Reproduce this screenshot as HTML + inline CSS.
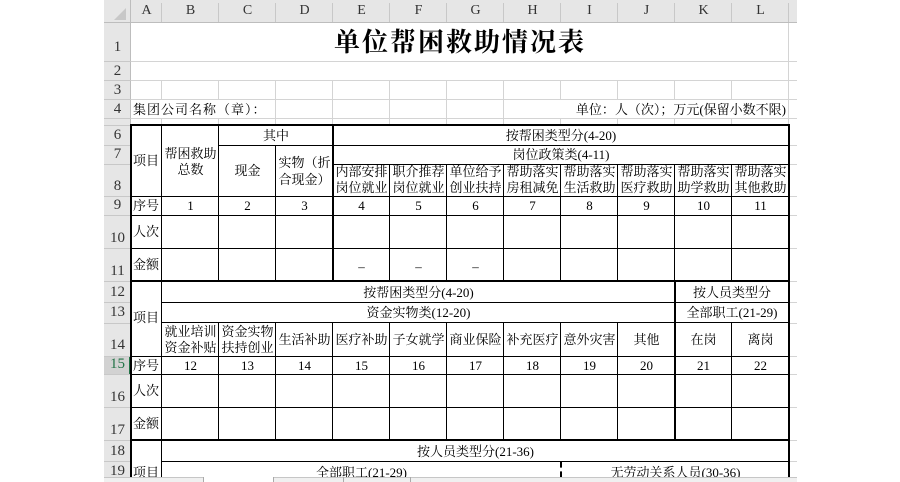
<!DOCTYPE html>
<html><head><meta charset="utf-8">
<style>
*{margin:0;padding:0;box-sizing:border-box}
body{width:900px;height:482px;background:#fff;position:relative;overflow:hidden;font-family:"Liberation Serif","Noto Serif CJK SC",serif;color:#000}
div{position:absolute}
.g{background:#d4d4d4}
.k{background:#000}
.t{display:flex;align-items:center;justify-content:center;text-align:center;font-size:13px;line-height:15px;white-space:nowrap}
.hd{background:#e6e6e6}
.cl{font-size:14px;color:#333;text-align:center;top:3px;height:18px}
.rn{font-size:15px;color:#333;left:104px;width:27px;text-align:center}
</style></head><body>
<div class="hd" style="left:104px;top:0;width:693px;height:23px"></div>
<div class="hd" style="left:104px;top:23px;width:27px;height:454px"></div>
<div style="left:104px;top:22px;width:693px;height:1px;background:#bdbdbd"></div>
<div style="left:130px;top:0;width:1px;height:477px;background:#bdbdbd"></div>
<div style="left:114px;top:8px;width:0;height:0;border-left:12px solid transparent;border-bottom:12px solid #c8c8c8"></div>
<div style="left:161px;top:3px;width:1px;height:19px;background:#c8c8c8"></div>
<div style="left:218px;top:3px;width:1px;height:19px;background:#c8c8c8"></div>
<div style="left:275px;top:3px;width:1px;height:19px;background:#c8c8c8"></div>
<div style="left:332px;top:3px;width:1px;height:19px;background:#c8c8c8"></div>
<div style="left:389px;top:3px;width:1px;height:19px;background:#c8c8c8"></div>
<div style="left:446px;top:3px;width:1px;height:19px;background:#c8c8c8"></div>
<div style="left:503px;top:3px;width:1px;height:19px;background:#c8c8c8"></div>
<div style="left:560px;top:3px;width:1px;height:19px;background:#c8c8c8"></div>
<div style="left:617px;top:3px;width:1px;height:19px;background:#c8c8c8"></div>
<div style="left:674px;top:3px;width:1px;height:19px;background:#c8c8c8"></div>
<div style="left:731px;top:3px;width:1px;height:19px;background:#c8c8c8"></div>
<div style="left:788px;top:3px;width:1px;height:19px;background:#c8c8c8"></div>
<div class="cl" style="left:131px;width:31px">A</div>
<div class="cl" style="left:162px;width:57px">B</div>
<div class="cl" style="left:219px;width:57px">C</div>
<div class="cl" style="left:276px;width:57px">D</div>
<div class="cl" style="left:333px;width:57px">E</div>
<div class="cl" style="left:390px;width:57px">F</div>
<div class="cl" style="left:447px;width:57px">G</div>
<div class="cl" style="left:504px;width:57px">H</div>
<div class="cl" style="left:561px;width:57px">I</div>
<div class="cl" style="left:618px;width:57px">J</div>
<div class="cl" style="left:675px;width:57px">K</div>
<div class="cl" style="left:732px;width:57px">L</div>
<div class="rn" style="top:39px">1</div>
<div class="rn" style="top:63px">2</div>
<div class="rn" style="top:82px">3</div>
<div class="rn" style="top:101px">4</div>
<div class="rn" style="top:127px">6</div>
<div class="rn" style="top:146px">7</div>
<div class="rn" style="top:178px">8</div>
<div class="rn" style="top:197px">9</div>
<div class="rn" style="top:230px">10</div>
<div class="rn" style="top:263px">11</div>
<div class="rn" style="top:284px">12</div>
<div class="rn" style="top:304px">13</div>
<div class="rn" style="top:337px">14</div>
<div style="left:104px;top:356px;width:27px;height:18px;background:#d2d2d2"></div>
<div style="left:129px;top:356px;width:2px;height:18px;background:#217346"></div>
<div class="rn" style="top:356px;color:#217346">15</div>
<div class="rn" style="top:389px">16</div>
<div class="rn" style="top:422px">17</div>
<div class="rn" style="top:443px">18</div>
<div class="rn" style="top:463px">19</div>
<div style="left:104px;top:61px;width:27px;height:1px;background:#c8c8c8"></div>
<div style="left:104px;top:80px;width:27px;height:1px;background:#c8c8c8"></div>
<div style="left:104px;top:99px;width:27px;height:1px;background:#c8c8c8"></div>
<div style="left:104px;top:118px;width:27px;height:1px;background:#c8c8c8"></div>
<div style="left:104px;top:125px;width:27px;height:1px;background:#c8c8c8"></div>
<div style="left:104px;top:145px;width:27px;height:1px;background:#c8c8c8"></div>
<div style="left:104px;top:164px;width:27px;height:1px;background:#c8c8c8"></div>
<div style="left:104px;top:196px;width:27px;height:1px;background:#c8c8c8"></div>
<div style="left:104px;top:215px;width:27px;height:1px;background:#c8c8c8"></div>
<div style="left:104px;top:248px;width:27px;height:1px;background:#c8c8c8"></div>
<div style="left:104px;top:281px;width:27px;height:1px;background:#c8c8c8"></div>
<div style="left:104px;top:302px;width:27px;height:1px;background:#c8c8c8"></div>
<div style="left:104px;top:323px;width:27px;height:1px;background:#c8c8c8"></div>
<div style="left:104px;top:356px;width:27px;height:1px;background:#c8c8c8"></div>
<div style="left:104px;top:374px;width:27px;height:1px;background:#c8c8c8"></div>
<div style="left:104px;top:407px;width:27px;height:1px;background:#c8c8c8"></div>
<div style="left:104px;top:440px;width:27px;height:1px;background:#c8c8c8"></div>
<div style="left:104px;top:461px;width:27px;height:1px;background:#c8c8c8"></div>

<div class="g" style="left:131px;top:61px;width:666px;height:1px"></div>
<div class="g" style="left:131px;top:80px;width:666px;height:1px"></div>
<div class="g" style="left:131px;top:99px;width:666px;height:1px"></div>
<div class="g" style="left:131px;top:118px;width:666px;height:1px"></div>
<div class="g" style="left:161px;top:80px;width:1px;height:19px"></div>
<div class="g" style="left:218px;top:80px;width:1px;height:19px"></div>
<div class="g" style="left:275px;top:80px;width:1px;height:45px"></div>
<div class="g" style="left:332px;top:80px;width:1px;height:45px"></div>
<div class="g" style="left:389px;top:80px;width:1px;height:45px"></div>
<div class="g" style="left:446px;top:80px;width:1px;height:45px"></div>
<div class="g" style="left:503px;top:80px;width:1px;height:45px"></div>
<div class="g" style="left:560px;top:80px;width:1px;height:19px"></div>
<div class="g" style="left:617px;top:80px;width:1px;height:19px"></div>
<div class="g" style="left:674px;top:80px;width:1px;height:19px"></div>
<div class="g" style="left:731px;top:80px;width:1px;height:19px"></div>
<div class="g" style="left:161px;top:118px;width:1px;height:7px"></div>
<div class="g" style="left:218px;top:118px;width:1px;height:7px"></div>
<div class="g" style="left:560px;top:118px;width:1px;height:7px"></div>
<div class="g" style="left:617px;top:118px;width:1px;height:7px"></div>
<div class="g" style="left:674px;top:118px;width:1px;height:7px"></div>
<div class="g" style="left:731px;top:118px;width:1px;height:7px"></div>
<div class="g" style="left:788px;top:23px;width:1px;height:102px"></div>
<div class="g" style="left:790px;top:145px;width:7px;height:1px"></div>
<div class="g" style="left:790px;top:164px;width:7px;height:1px"></div>
<div class="g" style="left:790px;top:196px;width:7px;height:1px"></div>
<div class="g" style="left:790px;top:215px;width:7px;height:1px"></div>
<div class="g" style="left:790px;top:248px;width:7px;height:1px"></div>
<div class="g" style="left:790px;top:281px;width:7px;height:1px"></div>
<div class="g" style="left:790px;top:302px;width:7px;height:1px"></div>
<div class="g" style="left:790px;top:323px;width:7px;height:1px"></div>
<div class="g" style="left:790px;top:356px;width:7px;height:1px"></div>
<div class="g" style="left:790px;top:374px;width:7px;height:1px"></div>
<div class="g" style="left:790px;top:407px;width:7px;height:1px"></div>
<div class="g" style="left:790px;top:440px;width:7px;height:1px"></div>
<div class="g" style="left:790px;top:461px;width:7px;height:1px"></div>

<div class="t" style="left:131px;top:23px;width:658px;height:38px;font-size:26px;font-weight:bold;letter-spacing:2px">单位帮困救助情况表</div>
<div class="t" style="left:133px;top:100px;height:18px;font-size:13px;letter-spacing:1px;justify-content:flex-start">集团公司名称（章）：</div>
<div class="t" style="left:560px;top:100px;width:226px;height:18px;justify-content:flex-end">单位：人（次）；万元(保留小数不限)</div>

<div class="k" style="left:130px;top:124px;width:660px;height:2px"></div>
<div class="k" style="left:130px;top:124px;width:2px;height:353px"></div>
<div class="k" style="left:788px;top:124px;width:2px;height:353px"></div>
<div class="k" style="left:332px;top:124px;width:2px;height:157px"></div>
<div class="k" style="left:130px;top:280px;width:660px;height:2px"></div>
<div class="k" style="left:130px;top:439px;width:660px;height:2px"></div>
<div class="k" style="left:674px;top:281px;width:2px;height:159px"></div>
<div class="k" style="left:161px;top:125px;width:1px;height:352px"></div>
<div class="k" style="left:219px;top:145px;width:114px;height:1px"></div>
<div class="k" style="left:333px;top:145px;width:456px;height:1px"></div>
<div class="k" style="left:333px;top:164px;width:456px;height:1px"></div>
<div class="k" style="left:131px;top:196px;width:658px;height:1px"></div>
<div class="k" style="left:131px;top:215px;width:658px;height:1px"></div>
<div class="k" style="left:131px;top:248px;width:658px;height:1px"></div>
<div class="k" style="left:218px;top:125px;width:1px;height:156px"></div>
<div class="k" style="left:275px;top:145px;width:1px;height:136px"></div>
<div class="k" style="left:389px;top:164px;width:1px;height:117px"></div>
<div class="k" style="left:446px;top:164px;width:1px;height:117px"></div>
<div class="k" style="left:503px;top:164px;width:1px;height:117px"></div>
<div class="k" style="left:560px;top:164px;width:1px;height:117px"></div>
<div class="k" style="left:617px;top:164px;width:1px;height:117px"></div>
<div class="k" style="left:674px;top:164px;width:1px;height:117px"></div>
<div class="k" style="left:731px;top:164px;width:1px;height:117px"></div>
<div class="k" style="left:162px;top:302px;width:627px;height:1px"></div>
<div class="k" style="left:162px;top:322px;width:627px;height:1px"></div>
<div class="k" style="left:131px;top:356px;width:658px;height:1px"></div>
<div class="k" style="left:131px;top:374px;width:658px;height:1px"></div>
<div class="k" style="left:131px;top:407px;width:658px;height:1px"></div>
<div class="k" style="left:218px;top:322px;width:1px;height:118px"></div>
<div class="k" style="left:275px;top:322px;width:1px;height:118px"></div>
<div class="k" style="left:332px;top:322px;width:1px;height:118px"></div>
<div class="k" style="left:389px;top:322px;width:1px;height:118px"></div>
<div class="k" style="left:446px;top:322px;width:1px;height:118px"></div>
<div class="k" style="left:503px;top:322px;width:1px;height:118px"></div>
<div class="k" style="left:560px;top:322px;width:1px;height:118px"></div>
<div class="k" style="left:617px;top:322px;width:1px;height:118px"></div>
<div class="k" style="left:731px;top:322px;width:1px;height:118px"></div>
<div class="k" style="left:162px;top:461px;width:627px;height:1px"></div>
<div style="left:560px;top:462px;width:2px;height:15px;border-left:2px dashed #000"></div>

<div class="t" style="left:133px;top:145px;width:29px;height:30px;justify-content:flex-start">项目</div>
<div class="t" style="left:162px;top:145px;width:57px;height:34px;line-height:16px">帮困救助<br>总数</div>
<div class="t" style="left:219px;top:125px;width:114px;height:20px">其中</div>
<div class="t" style="left:219px;top:145px;width:57px;height:51px">现金</div>
<div class="t" style="left:276px;top:145px;width:57px;height:51px;line-height:17px">实物（折<br>合现金）</div>
<div class="t" style="left:333px;top:125px;width:456px;height:20px">按帮困类型分(4-20)</div>
<div class="t" style="left:333px;top:145px;width:456px;height:19px">岗位政策类(4-11)</div>
<div class="t" style="left:333px;top:164px;width:57px;height:32px;line-height:16px">内部安排<br>岗位就业</div>
<div class="t" style="left:390px;top:164px;width:57px;height:32px;line-height:16px">职介推荐<br>岗位就业</div>
<div class="t" style="left:447px;top:164px;width:57px;height:32px;line-height:16px">单位给予<br>创业扶持</div>
<div class="t" style="left:504px;top:164px;width:57px;height:32px;line-height:16px">帮助落实<br>房租减免</div>
<div class="t" style="left:561px;top:164px;width:57px;height:32px;line-height:16px">帮助落实<br>生活救助</div>
<div class="t" style="left:618px;top:164px;width:57px;height:32px;line-height:16px">帮助落实<br>医疗救助</div>
<div class="t" style="left:675px;top:164px;width:57px;height:32px;line-height:16px">帮助落实<br>助学救助</div>
<div class="t" style="left:732px;top:164px;width:57px;height:32px;line-height:16px">帮助落实<br>其他救助</div>
<div class="t" style="left:133px;top:196px;width:29px;height:19px;justify-content:flex-start">序号</div>
<div class="t" style="left:162px;top:196px;width:57px;height:19px">1</div>
<div class="t" style="left:219px;top:196px;width:57px;height:19px">2</div>
<div class="t" style="left:276px;top:196px;width:57px;height:19px">3</div>
<div class="t" style="left:333px;top:196px;width:57px;height:19px">4</div>
<div class="t" style="left:390px;top:196px;width:57px;height:19px">5</div>
<div class="t" style="left:447px;top:196px;width:57px;height:19px">6</div>
<div class="t" style="left:504px;top:196px;width:57px;height:19px">7</div>
<div class="t" style="left:561px;top:196px;width:57px;height:19px">8</div>
<div class="t" style="left:618px;top:196px;width:57px;height:19px">9</div>
<div class="t" style="left:675px;top:196px;width:57px;height:19px">10</div>
<div class="t" style="left:732px;top:196px;width:57px;height:19px">11</div>
<div class="t" style="left:133px;top:215px;width:29px;height:33px;justify-content:flex-start">人次</div>
<div class="t" style="left:133px;top:248px;width:29px;height:33px;justify-content:flex-start">金额</div>
<div class="t" style="left:333px;top:252px;width:57px;height:29px">–</div>
<div class="t" style="left:390px;top:252px;width:57px;height:29px">–</div>
<div class="t" style="left:447px;top:252px;width:57px;height:29px">–</div>

<div class="t" style="left:133px;top:302px;width:29px;height:30px;justify-content:flex-start">项目</div>
<div class="t" style="left:162px;top:282px;width:513px;height:20px">按帮困类型分(4-20)</div>
<div class="t" style="left:675px;top:282px;width:114px;height:20px">按人员类型分</div>
<div class="t" style="left:162px;top:302px;width:513px;height:20px">资金实物类(12-20)</div>
<div class="t" style="left:675px;top:302px;width:114px;height:20px">全部职工(21-29)</div>
<div class="t" style="left:162px;top:323px;width:57px;height:33px;line-height:16px">就业培训<br>资金补贴</div>
<div class="t" style="left:219px;top:323px;width:57px;height:33px;line-height:16px">资金实物<br>扶持创业</div>
<div class="t" style="left:276px;top:323px;width:57px;height:33px">生活补助</div>
<div class="t" style="left:333px;top:323px;width:57px;height:33px">医疗补助</div>
<div class="t" style="left:390px;top:323px;width:57px;height:33px">子女就学</div>
<div class="t" style="left:447px;top:323px;width:57px;height:33px">商业保险</div>
<div class="t" style="left:504px;top:323px;width:57px;height:33px">补充医疗</div>
<div class="t" style="left:561px;top:323px;width:57px;height:33px">意外灾害</div>
<div class="t" style="left:618px;top:323px;width:57px;height:33px">其他</div>
<div class="t" style="left:675px;top:323px;width:57px;height:33px">在岗</div>
<div class="t" style="left:732px;top:323px;width:57px;height:33px">离岗</div>
<div class="t" style="left:133px;top:356px;width:29px;height:18px;justify-content:flex-start">序号</div>
<div class="t" style="left:162px;top:356px;width:57px;height:18px">12</div>
<div class="t" style="left:219px;top:356px;width:57px;height:18px">13</div>
<div class="t" style="left:276px;top:356px;width:57px;height:18px">14</div>
<div class="t" style="left:333px;top:356px;width:57px;height:18px">15</div>
<div class="t" style="left:390px;top:356px;width:57px;height:18px">16</div>
<div class="t" style="left:447px;top:356px;width:57px;height:18px">17</div>
<div class="t" style="left:504px;top:356px;width:57px;height:18px">18</div>
<div class="t" style="left:561px;top:356px;width:57px;height:18px">19</div>
<div class="t" style="left:618px;top:356px;width:57px;height:18px">20</div>
<div class="t" style="left:675px;top:356px;width:57px;height:18px">21</div>
<div class="t" style="left:732px;top:356px;width:57px;height:18px">22</div>
<div class="t" style="left:133px;top:374px;width:29px;height:33px;justify-content:flex-start">人次</div>
<div class="t" style="left:133px;top:407px;width:29px;height:33px;justify-content:flex-start">金额</div>

<div class="t" style="left:162px;top:441px;width:627px;height:20px">按人员类型分(21-36)</div>
<div class="t" style="left:133px;top:464px;width:29px;height:16px;justify-content:flex-start">项目</div>
<div class="t" style="left:162px;top:464px;width:399px;height:16px">全部职工(21-29)</div>
<div class="t" style="left:562px;top:464px;width:227px;height:16px">无劳动关系人员(30-36)</div>

<div style="left:104px;top:477px;width:693px;height:5px;background:#f0f0f0;border-top:1px solid #c6c6c6"></div>
<div style="left:203px;top:477px;width:70px;height:5px;background:#fff"></div>
<div style="left:203px;top:477px;width:1px;height:5px;background:#aaa"></div>
<div style="left:273px;top:477px;width:1px;height:5px;background:#aaa"></div>
<div style="left:343px;top:477px;width:1px;height:5px;background:#aaa"></div>
<div style="left:410px;top:477px;width:1px;height:5px;background:#aaa"></div>
</body></html>
